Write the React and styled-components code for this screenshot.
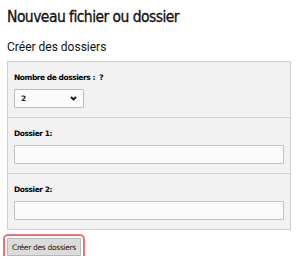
import React from 'react';
import styled, { createGlobalStyle } from 'styled-components';

const GlobalStyle = createGlobalStyle`
    html, body {
        margin: 0;
        padding: 0;
        background: #ffffff;
    }
    body {
        font-family: 'DejaVu Sans', Verdana, sans-serif;
        color: #000;
    }
`;

const Page = styled.div`
    padding: 7px 8px 0 7px;
`;

const Title = styled.h1`
    margin: 0;
    font-family: 'DejaVu Sans Condensed', 'DejaVu Sans', sans-serif;
    font-weight: normal;
    font-size: 15.5px;
    letter-spacing: -0.55px;
    line-height: 21px;
    color: #111;
    -webkit-text-stroke: 0.3px #111;
`;

const SubTitle = styled.h2`
    margin: 12px 0 0;
    font-family: Roboto, 'DejaVu Sans', sans-serif;
    font-weight: normal;
    font-size: 12px;
    line-height: 14px;
    color: #111;
`;

const Panel = styled.div`
    margin-top: 7px;
    border: 1px solid #cfcfcf;
    background: #f2f2f2;
`;

const Section = styled.div`
    padding: 10px 6px 9px;
    border-top: ${p => (p.first ? 'none' : '1px solid #d3d3d3')};
`;

const Label = styled.label`
    display: block;
    font-weight: bold;
    font-size: 7.5px;
    letter-spacing: -0.45px;
    line-height: 11px;
    margin-bottom: 6px;
    color: #000;
`;

const SelectBox = styled.div`
    width: 70px;
    height: 19px;
    box-sizing: border-box;
    border: 1px solid #bdbdbd;
    border-radius: 1px;
    background: #fbfbfb;
    display: flex;
    align-items: center;
    justify-content: space-between;
    padding: 0 6px;
    font-size: 7.5px;
    font-weight: bold;
    color: #222;
`;

const Input = styled.input`
    display: block;
    width: 100%;
    height: 19px;
    box-sizing: border-box;
    border: 1px solid #c2c2c2;
    border-radius: 1px;
    background: #fafafa;
    margin: 0;
    font-size: 8px;
`;

const ButtonRow = styled.div`
    display: flex;
    margin-top: 8px;
`;

const Button = styled.button`
    font-family: 'DejaVu Sans', Verdana, sans-serif;
    font-size: 7.5px;
    letter-spacing: -0.3px;
    height: 18px;
    padding: 0 4px;
    background: #dcdcdc;
    border: 1px solid #b8b8b8;
    border-radius: 1px;
    color: #111;
    outline: 2px solid rgba(232, 80, 86, 0.8);
    outline-offset: 2px;
`;

const Chevron = () => (
    <svg width="7" height="5" viewBox="0 0 7 5">
        <path d="M1 1 L3.5 3.5 L6 1" fill="none" stroke="#111" strokeWidth="1.8" />
    </svg>
);

export default function App() {
    return (
        <Page>
            <GlobalStyle />
            <Title>Nouveau fichier ou dossier</Title>
            <SubTitle>Créer des dossiers</SubTitle>
            <Panel>
                <Section first>
                    <Label>Nombre de dossiers :&nbsp; ?</Label>
                    <SelectBox>
                        <span>2</span>
                        <Chevron />
                    </SelectBox>
                </Section>
                <Section>
                    <Label>Dossier 1:</Label>
                    <Input type="text" />
                </Section>
                <Section>
                    <Label>Dossier 2:</Label>
                    <Input type="text" />
                </Section>
            </Panel>
            <ButtonRow>
                <Button>Créer des dossiers</Button>
            </ButtonRow>
        </Page>
    );
}
